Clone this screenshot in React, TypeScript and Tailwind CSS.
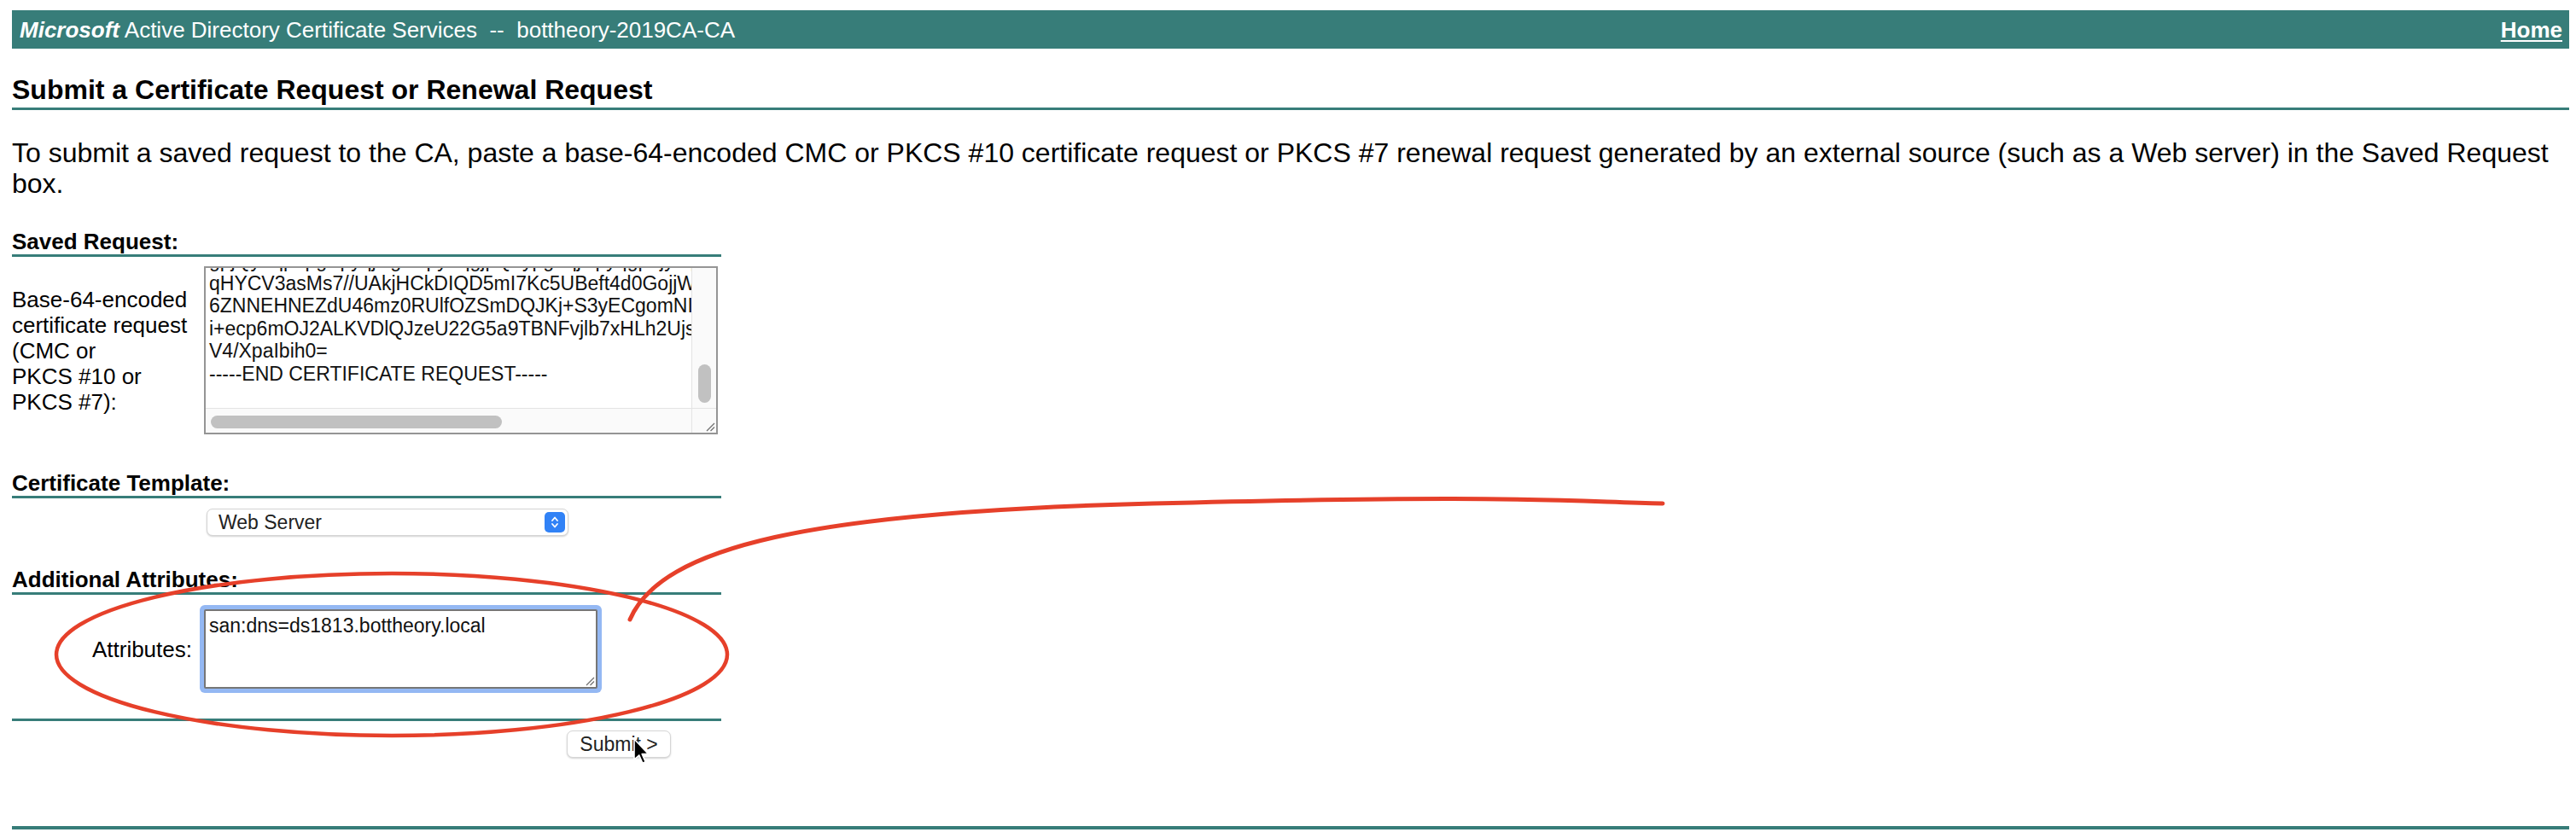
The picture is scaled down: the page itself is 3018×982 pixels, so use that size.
import React from 'react';

const requestLines = [
  'gpjQyTqp0pgSpyqjHgU9pyZqgjpQ2ypgFqjNpyqgp7jyMpq',
  'qHYCV3asMs7//UAkjHCkDIQD5mI7Kc5UBeft4d0GojjWk3pLq8rT',
  '6ZNNEHNEZdU46mz0RUlfOZSmDQJKj+S3yECgomNIr8TwQe2x',
  'i+ecp6mOJ2ALKVDlQJzeU22G5a9TBNFvjlb7xHLh2Ujs9QaZ',
  'V4/XpaIbih0=',
  '-----END CERTIFICATE REQUEST-----',
];

const ResizeGrip = () => (
  <svg width="12" height="12" viewBox="0 0 12 12" className="block">
    <line x1="11" y1="2" x2="2" y2="11" stroke="#707070" strokeWidth="1.2" />
    <line x1="11" y1="6.5" x2="6.5" y2="11" stroke="#707070" strokeWidth="1.2" />
  </svg>
);

const SavedRequestBox = () => (
  <div className="flex h-[197px] w-[602px] flex-col border-2 border-[#959595] bg-white">
    <div className="flex min-h-0 flex-1">
      <div className="min-w-0 flex-1 overflow-hidden whitespace-pre pl-[4px] text-[23px] leading-[26.5px] text-[#111]">
        <div className="-mt-[22px]">
          {requestLines.map((l, i) => (
            <div key={i}>{l}</div>
          ))}
        </div>
      </div>
      <div className="flex w-[29px] flex-col items-center justify-end border-l border-[#e4e4e4] bg-[#fafafa] pb-[6px]">
        <div className="h-[45px] w-[15px] rounded-full bg-[#c1c1c1]" />
      </div>
    </div>
    <div className="flex h-[29px] border-t border-[#e4e4e4] bg-[#fafafa]">
      <div className="flex-1 pl-[6px] pt-[8px]">
        <div className="h-[15px] w-[341px] rounded-full bg-[#c1c1c1]" />
      </div>
      <div className="flex w-[29px] items-end justify-end border-l border-[#e4e4e4] pb-[1px] pr-[1px]">
        <ResizeGrip />
      </div>
    </div>
  </div>
);

export default function App() {
  return (
    <div className="relative min-h-screen bg-white pl-[14px] pr-[8px] pt-[12px] font-['Liberation_Sans',Arial,Helvetica,sans-serif] text-black">
      {/* title bar */}
      <div className="flex h-[45px] items-center justify-between bg-[#377d79] pl-[9px] pr-[8px] text-[26px] leading-[30px] text-white">
        <div className="whitespace-pre">
          <b>
            <i>Microsoft</i>
          </b>
          {' Active Directory Certificate Services  --  bottheory-2019CA-CA'}
        </div>
        <a className="font-bold underline underline-offset-[3px]">Home</a>
      </div>

      <h1 className="mt-[30px] border-b-[3px] border-[#377d79] pb-[2px] text-[32px] font-bold leading-[37px]">
        Submit a Certificate Request or Renewal Request
      </h1>

      <p className="mt-[32px] text-[32px] leading-[36px]">
        To submit a saved request to the CA, paste a base-64-encoded CMC or PKCS #10 certificate request or PKCS #7
        renewal request generated by an external source (such as a Web server) in the Saved Request box.
      </p>

      <div className="w-[831px]">
        <h2 className="mt-[35px] border-b-[3px] border-[#377d79] text-[26px] font-bold leading-[30px]">Saved Request:</h2>
        <div className="mt-[11px] flex items-center">
          <div className="w-[225px] text-[26px] leading-[30px]">
            Base-64-encoded
            <br />
            certificate request
            <br />
            (CMC or
            <br />
            PKCS #10 or
            <br />
            PKCS #7):
          </div>
          <SavedRequestBox />
        </div>

        <h2 className="mt-[42px] border-b-[3px] border-[#377d79] text-[26px] font-bold leading-[30px]">
          Certificate Template:
        </h2>
        <div className="mt-[12px] pl-[228px]">
          <div className="flex h-[32px] w-[424px] items-center justify-between rounded-[7px] border border-[#d4d4d4] bg-white pl-[13px] pr-[3px] shadow-[0_1px_2px_rgba(0,0,0,0.18)]">
            <span className="text-[23px] leading-none text-[#222]">Web Server</span>
            <span className="flex h-[24px] w-[24px] items-center justify-center rounded-[5px] bg-[#3182f6]">
              <svg width="12" height="18" viewBox="0 0 12 18">
                <path d="M3 7 L6 3.5 L9 7" fill="none" stroke="white" strokeWidth="1.8" strokeLinecap="round" strokeLinejoin="round" />
                <path d="M3 11 L6 14.5 L9 11" fill="none" stroke="white" strokeWidth="1.8" strokeLinecap="round" strokeLinejoin="round" />
              </svg>
            </span>
          </div>
        </div>

        <h2 className="mt-[36px] border-b-[3px] border-[#377d79] text-[26px] font-bold leading-[30px]">
          Additional Attributes:
        </h2>
        <div className="mt-[17px] flex items-center">
          <div className="w-[225px] pr-[14px] text-right text-[26px] leading-[30px]">Attributes:</div>
          <div className="relative h-[93px] w-[461px] rounded-[2px] border-2 border-[#767676] bg-white pl-[4px] pt-[4px] text-[23px] leading-[26.5px] text-[#111] ring-[5px] ring-[#94b8f3]">
            san:dns=ds1813.bottheory.local
            <div className="absolute bottom-[1px] right-[1px]">
              <ResizeGrip />
            </div>
          </div>
        </div>

        <div className="mt-[35px] h-[3px] bg-[#377d79]" />
        <div className="mt-[11px] pl-[650px]">
          <button className="flex h-[32px] w-[122px] items-center justify-center rounded-[7px] border border-[#d6d6d6] bg-white text-[23px] text-[#222] shadow-[0_1px_2px_rgba(0,0,0,0.18)]">
            Submit &gt;
          </button>
        </div>
      </div>

      <div className="mt-[80px] h-[4px] bg-[#377d79]" />

      {/* red hand-drawn annotation and mouse pointer */}
      <svg className="pointer-events-none absolute left-0 top-0" width="3018" height="982" viewBox="0 0 3018 982">
        <ellipse cx="459" cy="767" rx="393" ry="95" fill="none" stroke="#e6402a" strokeWidth="4.5" />
        <path
          d="M738 726 C775 640, 950 600, 1350 590 S1800 586, 1948 590"
          fill="none"
          stroke="#e6402a"
          strokeWidth="5"
          strokeLinecap="round"
        />
        <g transform="translate(743 866) scale(1.15)">
          <path
            d="M0 0 L0 21 L5 16.5 L8.5 24.5 L11.5 23.2 L8 15.3 L14.5 15.3 Z"
            fill="#000"
            stroke="#fff"
            strokeWidth="1.4"
            strokeLinejoin="round"
          />
        </g>
      </svg>
    </div>
  );
}
